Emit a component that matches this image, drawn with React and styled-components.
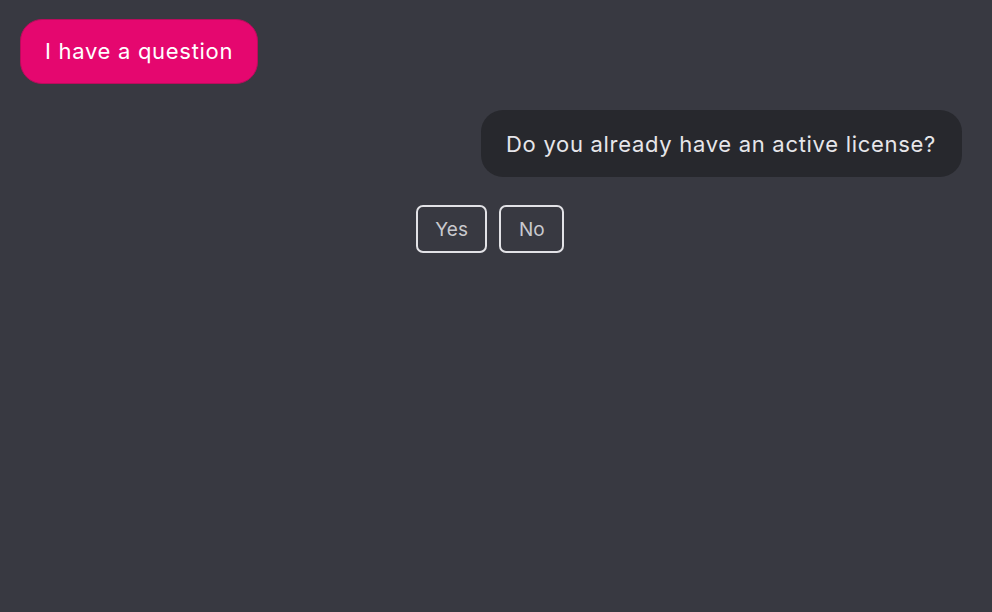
import React from "react";
import styled, { createGlobalStyle } from "styled-components";

const Global = createGlobalStyle`
  html, body { margin: 0; padding: 0; background: #383941; }
  body { font-family: "Inter", "Lato", sans-serif; }
`;

const Page = styled.div`
  min-height: 612px;
  box-sizing: border-box;
  padding: 19px 30px 0 20px;
  display: flex;
  flex-direction: column;
  background: #383941;
`;

const Bubble = styled.div`
  box-sizing: border-box;
  font-size: 22px;
  letter-spacing: 0.7px;
  line-height: 26px;
  border-radius: 22px;
  align-self: ${(p) => (p.$mine ? "flex-start" : "flex-end")};
  background: ${(p) => (p.$mine ? "#e5076f" : "#27282d")};
  color: ${(p) => (p.$mine ? "#ffffff" : "#e6e6ea")};
  border: ${(p) => (p.$mine ? "1.5px solid #b90c5c" : "none")};
  padding: ${(p) => (p.$mine ? "18px 24px 19px 24px" : "21px 26px 20px 25px")};
  margin-top: ${(p) => p.$top || 0}px;
`;

const Options = styled.div`
  display: flex;
  justify-content: center;
  gap: 12px;
  margin-top: 28px;
  padding-right: 2px;
`;

const Option = styled.button`
  font-family: inherit;
  font-size: 19px;
  height: 48px;
  padding: 0 17.5px;
  background: transparent;
  color: #c9c9ce;
  border: 2px solid #e2e2e6;
  border-radius: 7px;
  cursor: pointer;
`;

export default function App() {
  return (
    <>
      <Global />
      <Page>
        <Bubble $mine>I have a question</Bubble>
        <Bubble $top={26}>Do you already have an active license?</Bubble>
        <Options>
          <Option>Yes</Option>
          <Option>No</Option>
        </Options>
      </Page>
    </>
  );
}
